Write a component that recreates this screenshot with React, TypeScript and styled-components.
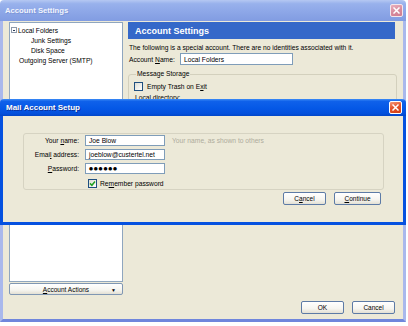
import React from "react";
import styled, { createGlobalStyle } from "styled-components";

const GlobalStyle = createGlobalStyle`
  html, body { margin: 0; padding: 0; background: #ffffff; }
  body { font-family: "Liberation Sans", Arial, sans-serif; font-size: 6.7px; color: #000; }
  #root { width: 408px; height: 326px; }
  * { box-sizing: border-box; }
`;

const Screen = styled.div`
  position: relative;
  width: 408px;
  height: 326px;
  overflow: hidden;
  background: #ffffff;
`;

const Window = styled.div`
  width: 406px;
  height: 322px;
  display: flex;
  flex-direction: column;
`;

const TitleBar = styled.div<{ $active?: boolean }>`
  flex: none;
  height: ${(p) => (p.$active ? 17 : 21)}px;
  display: flex;
  align-items: center;
  justify-content: space-between;
  padding: ${(p) => (p.$active ? "0 4px 0 6px" : "0 3px 0 5px")};
  border-radius: 4px 4px 0 0;
  background: ${(p) =>
    p.$active
      ? "linear-gradient(180deg, #3d8cf6 0%, #0f61ea 14%, #0558e6 55%, #0350dc 85%, #0246c8 100%)"
      : "linear-gradient(180deg, #b5c8f2 0%, #98b1ec 18%, #8ca6e7 60%, #819ce2 100%)"};
  color: ${(p) => (p.$active ? "#ffffff" : "#f1f4fd")};
  font-weight: bold;
  font-size: ${(p) => (p.$active ? 8 : 7.7)}px;
  text-shadow: ${(p) => (p.$active ? "1px 1px 0 #0a2f9a" : "1px 1px 0 #7d96d8")};
  white-space: nowrap;
`;

const CloseButton = styled.div<{ $active?: boolean }>`
  width: 13px;
  height: 13px;
  border-radius: 2px;
  border: 1px solid ${(p) => (p.$active ? "#ffffff" : "#f3e6ec")};
  background: ${(p) =>
    p.$active
      ? "linear-gradient(160deg, #f39a7c 0%, #e5552c 45%, #cf3e15 100%)"
      : "linear-gradient(160deg, #e8b0bd 0%, #d88c9e 50%, #cf7d92 100%)"};
  display: flex;
  align-items: center;
  justify-content: center;
`;

const Frame = styled.div<{ $active?: boolean }>`
  flex: 1;
  min-height: 0;
  border: 3px solid ${(p) => (p.$active ? "#0551e0" : "#a9b8ec")};
  border-top: 0;
  ${(p) => (p.$active ? "" : "border-bottom-color: #6f86dc;")}
  background: #ece9d8;
`;

const SettingsBody = styled(Frame)`
  display: grid;
  grid-template-columns: 114px 269px;
  column-gap: 5px;
  padding: 1px 6px 5px 6px;
`;

const LeftColumn = styled.div`
  display: flex;
  flex-direction: column;
`;

const Tree = styled.div`
  height: 260px;
  background: #ffffff;
  border: 1px solid #8fa6bf;
  padding-top: 2px;
`;

const TreeRow = styled.div<{ $indent: number }>`
  height: 10px;
  display: flex;
  align-items: center;
  gap: 1px;
  padding-left: ${(p) => p.$indent}px;
  white-space: nowrap;
`;

const Expander = styled.span`
  width: 6px;
  height: 6px;
  border: 1px solid #8e9aab;
  background: #fff;
  position: relative;
  &::after {
    content: "";
    position: absolute;
    left: 1px;
    right: 1px;
    top: 1.5px;
    height: 1px;
    background: #2a3a55;
  }
`;

const XpButton = styled.div<{ $w?: number }>`
  height: 13px;
  width: ${(p) => (p.$w ? `${p.$w}px` : "auto")};
  border: 1px solid #5d7ba6;
  border-radius: 2px;
  background: linear-gradient(180deg, #ffffff 0%, #f6f5f0 60%, #e3e0d4 100%);
  display: flex;
  align-items: center;
  justify-content: center;
  font-size: 6.5px;
  white-space: nowrap;
`;

const ActionsButton = styled(XpButton)`
  margin-top: 1px;
  height: 12px;
  position: relative;
  border-color: #8097b3;
`;

const DropArrow = styled.span`
  position: absolute;
  right: 6px;
  top: 3px;
  font-size: 5px;
`;

const RightColumn = styled.div`
  display: flex;
  flex-direction: column;
`;

const PaneHeader = styled.div`
  width: 267px;
  height: 17px;
  background: #3568c9;
  color: #ffffff;
  font-weight: bold;
  font-size: 9px;
  display: flex;
  align-items: center;
  padding-left: 7px;
`;

const Line = styled.div<{ $top?: number }>`
  height: 10px;
  margin-top: ${(p) => p.$top ?? 0}px;
  display: flex;
  align-items: center;
  padding-left: 1px;
  white-space: nowrap;
`;

const FieldRow = styled.div`
  margin-top: 1px;
  height: 12px;
  display: grid;
  grid-template-columns: 51px 113px;
  align-items: center;
  padding-left: 1px;
`;

const TextBox = styled.div<{ $h?: number }>`
  height: ${(p) => p.$h ?? 12}px;
  background: #ffffff;
  border: 1px solid #7f9db9;
  display: flex;
  align-items: center;
  padding-left: 3px;
  white-space: nowrap;
  overflow: hidden;
`;

const GroupBox = styled.fieldset`
  margin: 4px 0 0 0;
  padding: 2px 0 0 5px;
  height: 110px;
  border: 1px solid #d3d0bd;
  border-radius: 3px;
`;

const GroupLegend = styled.legend`
  padding: 0 1px;
  margin-left: 2px;
  height: 10px;
  line-height: 10px;
`;

const CheckRow = styled.div`
  height: 10px;
  display: flex;
  align-items: center;
  gap: 4px;
  white-space: nowrap;
`;

const CheckBox = styled.span`
  width: 9px;
  height: 9px;
  flex: none;
  border: 1px solid #1f4f80;
  background: linear-gradient(135deg, #dcdcd4 0%, #f2f2ee 60%, #ffffff 100%);
  display: flex;
  align-items: center;
  justify-content: center;
`;

const ButtonRow = styled.div<{ $pad: number; $gap: number; $top?: number }>`
  display: flex;
  justify-content: flex-end;
  gap: ${(p) => p.$gap}px;
  padding-right: ${(p) => p.$pad}px;
  margin-top: ${(p) => (p.$top === undefined ? "auto" : `${p.$top}px`)};
`;

const Key = styled.span`
  text-decoration: underline;
  text-underline-offset: 1px;
`;

const Dialog = styled.div`
  position: absolute;
  top: 99px;
  left: 0;
  width: 406px;
  height: 126px;
  display: flex;
  flex-direction: column;
`;

const DialogBody = styled(Frame)`
  display: flex;
  flex-direction: column;
  padding: 17px 19px 0 20px;
`;

const SetupGroup = styled.div`
  height: 57px;
  border: 1px solid #d6d3c2;
  border-radius: 3px;
  padding-top: 1px;
  display: grid;
  grid-template-columns: 55px 80px 1fr;
  grid-auto-rows: 11px;
  column-gap: 6px;
  row-gap: 3px;
  align-items: center;
`;

const Label = styled.span`
  text-align: right;
  white-space: nowrap;
`;

const Hint = styled.span`
  color: #aeab9c;
  white-space: nowrap;
  padding-left: 1px;
`;

const Dots = styled.span`
  font-family: "DejaVu Sans", sans-serif;
  font-size: 4.6px;
  letter-spacing: 0.8px;
`;

const RememberRow = styled(CheckRow)`
  grid-column: 2 / 4;
  padding-left: 3px;
  gap: 3px;
  margin-top: 1px;
`;

const CloseGlyph = () => (
  <svg width="7" height="7" viewBox="0 0 7 7">
    <path d="M1 1 L6 6 M6 1 L1 6" stroke="#ffffff" strokeWidth="1.5" strokeLinecap="square" />
  </svg>
);

const CheckGlyph = () => (
  <svg width="7" height="7" viewBox="0 0 7 7">
    <path d="M1 3.4 L2.9 5.3 L6 1.6" stroke="#21a121" strokeWidth="1.5" fill="none" />
  </svg>
);

export default function App() {
  return (
    <Screen>
      <GlobalStyle />
      <Window>
        <TitleBar>
          <span>Account Settings</span>
          <CloseButton>
            <CloseGlyph />
          </CloseButton>
        </TitleBar>
        <SettingsBody>
          <LeftColumn>
            <Tree>
              <TreeRow $indent={1}>
                <Expander />
                <span>Local Folders</span>
              </TreeRow>
              <TreeRow $indent={21}>Junk Settings</TreeRow>
              <TreeRow $indent={21}>Disk Space</TreeRow>
              <TreeRow $indent={9}>Outgoing Server (SMTP)</TreeRow>
            </Tree>
            <ActionsButton>
              <span>
                <Key>A</Key>ccount Actions
              </span>
              <DropArrow>▼</DropArrow>
            </ActionsButton>
          </LeftColumn>
          <RightColumn>
            <PaneHeader>Account Settings</PaneHeader>
            <Line $top={3}>
              The following is a special account. There are no identities associated with it.
            </Line>
            <FieldRow>
              <span>
                Account <Key>N</Key>ame:
              </span>
              <TextBox>Local Folders</TextBox>
            </FieldRow>
            <GroupBox>
              <GroupLegend>Message Storage</GroupLegend>
              <CheckRow>
                <CheckBox />
                <span>
                  Empty Trash on E<Key>x</Key>it
                </span>
              </CheckRow>
              <Line $top={1}>Local directory:</Line>
            </GroupBox>
            <ButtonRow $pad={2} $gap={8}>
              <XpButton $w={43}>OK</XpButton>
              <XpButton $w={43}>Cancel</XpButton>
            </ButtonRow>
          </RightColumn>
        </SettingsBody>
      </Window>

      <Dialog>
        <TitleBar $active>
          <span>Mail Account Setup</span>
          <CloseButton $active>
            <CloseGlyph />
          </CloseButton>
        </TitleBar>
        <DialogBody $active>
          <SetupGroup>
            <Label>
              Your <Key>n</Key>ame:
            </Label>
            <TextBox $h={11}>Joe Blow</TextBox>
            <Hint>Your name, as shown to others</Hint>
            <Label>
              Emai<Key>l</Key> address:
            </Label>
            <TextBox $h={11}>joeblow@custertel.net</TextBox>
            <span />
            <Label>
              <Key>P</Key>assword:
            </Label>
            <TextBox $h={11}>
              <Dots>●●●●●●</Dots>
            </TextBox>
            <span />
            <span />
            <RememberRow>
              <CheckBox>
                <CheckGlyph />
              </CheckBox>
              <span>
                Re<Key>m</Key>ember password
              </span>
            </RememberRow>
          </SetupGroup>
          <ButtonRow $pad={3} $gap={8} $top={2}>
            <XpButton $w={43}>
              C<Key>a</Key>ncel
            </XpButton>
            <XpButton $w={47}>
              <Key>C</Key>ontinue
            </XpButton>
          </ButtonRow>
        </DialogBody>
      </Dialog>
    </Screen>
  );
}
